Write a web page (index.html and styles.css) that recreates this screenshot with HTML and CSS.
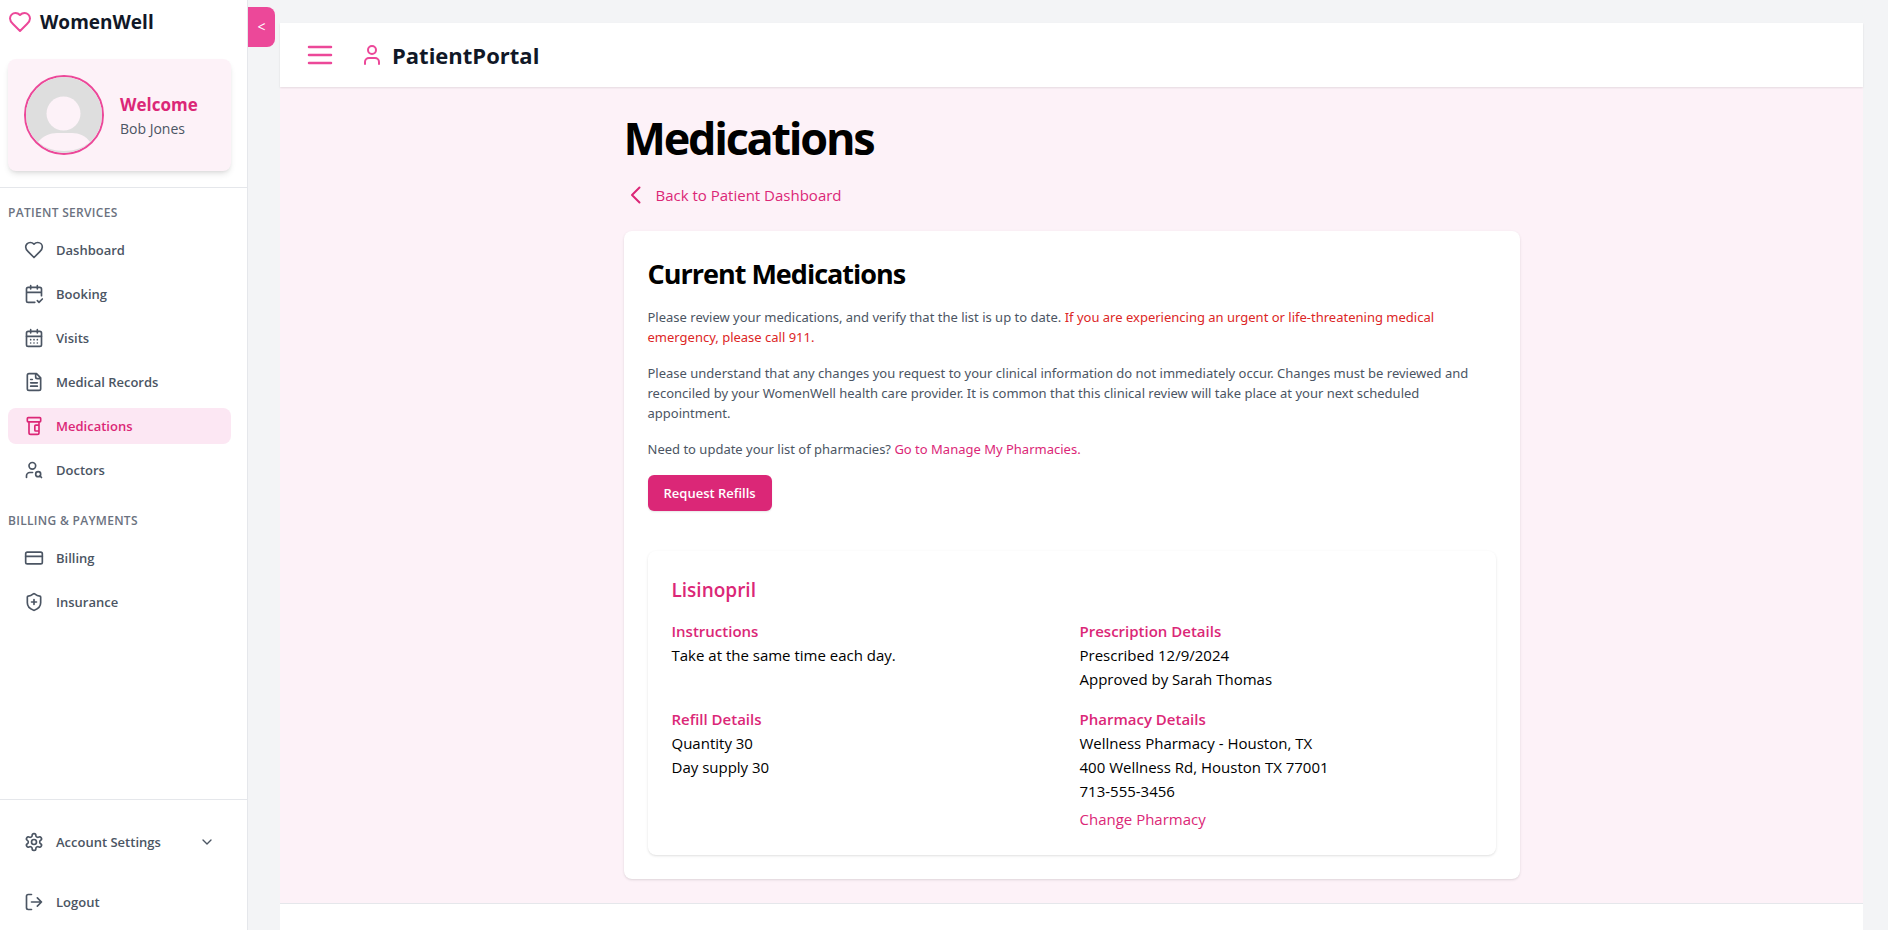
FILE: index.html
```html
<!DOCTYPE html>
<html lang="en">
<head>
<meta charset="utf-8">
<title>Medications - PatientPortal</title>
<link rel="stylesheet" href="styles.css">
</head>
<body>
<div class="app">
  <aside class="sidebar">
    <div class="sidebar-top">
      <a class="brand" href="#">
        <svg class="icon icon-lg" viewBox="0 0 24 24"><path d="M19 14c1.49-1.46 3-3.21 3-5.5A5.5 5.5 0 0 0 16.5 3c-1.76 0-3 .5-4.5 2-1.5-1.5-2.74-2-4.5-2A5.5 5.5 0 0 0 2 8.5c0 2.3 1.5 4.05 3 5.5l7 7Z"/></svg>
        <span>WomenWell</span>
      </a>
      <div class="profile">
        <svg class="avatar" viewBox="0 0 76 76" role="img" aria-label="Profile photo">
          <rect width="76" height="76" fill="#dedede"/>
          <circle cx="37.500" cy="36.500" r="17" fill="#fdf2f8"/>
          <path d="M12 65c5-6 12-9 19-9h15c7 0 14 3 18 9-7 6-16 9-26 9s-19-3-26-9z" fill="#fdf2f8"/>
        </svg>
        <div>
          <p class="welcome">Welcome</p>
          <p class="user-name">Bob Jones</p>
        </div>
      </div>
    </div>
    <nav class="nav">
      <section>
        <h2 class="nav-title">Patient Services</h2>
        <ul class="nav-list">
          <li><a class="nav-item" href="#"><svg class="icon" viewBox="0 0 24 24"><path d="M19 14c1.49-1.46 3-3.21 3-5.5A5.5 5.5 0 0 0 16.5 3c-1.76 0-3 .5-4.5 2-1.5-1.5-2.74-2-4.5-2A5.5 5.5 0 0 0 2 8.5c0 2.3 1.5 4.05 3 5.5l7 7Z"/></svg>Dashboard</a></li>
          <li><a class="nav-item" href="#"><svg class="icon" viewBox="0 0 24 24"><path d="M8 2v4M16 2v4M21 14V6a2 2 0 0 0-2-2H5a2 2 0 0 0-2 2v14a2 2 0 0 0 2 2h8M3 10h18M16 20l2 2 4-4"/></svg>Booking</a></li>
          <li><a class="nav-item" href="#"><svg class="icon" viewBox="0 0 24 24"><path d="M8 2v4M16 2v4M3 10h18M8 14h.01M12 14h.01M16 14h.01M8 18h.01M12 18h.01M16 18h.01"/><rect width="18" height="18" x="3" y="4" rx="2"/></svg>Visits</a></li>
          <li><a class="nav-item" href="#"><svg class="icon" viewBox="0 0 24 24"><path d="M15 2H6a2 2 0 0 0-2 2v16a2 2 0 0 0 2 2h12a2 2 0 0 0 2-2V7ZM14 2v4a2 2 0 0 0 2 2h4M10 9H8M16 13H8M16 17H8"/></svg>Medical Records</a></li>
          <li><a class="nav-item active" href="#" aria-current="page"><svg class="icon" viewBox="0 0 24 24"><path d="M18 11h-4a1 1 0 0 0-1 1v5a1 1 0 0 0 1 1h4M6 7v13a2 2 0 0 0 2 2h8a2 2 0 0 0 2-2V7"/><rect width="16" height="5" x="4" y="2" rx="1"/></svg>Medications</a></li>
          <li><a class="nav-item" href="#"><svg class="icon" viewBox="0 0 24 24"><circle cx="10" cy="7" r="4"/><path d="M10.300 15H7a4 4 0 0 0-4 4v2M21 21l-1.900-1.900"/><circle cx="17" cy="17" r="3"/></svg>Doctors</a></li>
        </ul>
      </section>
      <section>
        <h2 class="nav-title">Billing &amp; Payments</h2>
        <ul class="nav-list">
          <li><a class="nav-item" href="#"><svg class="icon" viewBox="0 0 24 24"><rect width="20" height="14" x="2" y="5" rx="2"/><path d="M2 10h20"/></svg>Billing</a></li>
          <li><a class="nav-item" href="#"><svg class="icon" viewBox="0 0 24 24"><path d="M20 13c0 5-3.500 7.500-7.660 8.950a1 1 0 0 1-.670-.010C7.500 20.500 4 18 4 13V6a1 1 0 0 1 1-1c2 0 4.500-1.200 6.240-2.720a1.170 1.170 0 0 1 1.520 0C14.510 3.810 17 5 19 5a1 1 0 0 1 1 1zM9 12h6M12 9v6"/></svg>Insurance</a></li>
        </ul>
      </section>
    </nav>
    <div class="sidebar-bottom">
      <button class="nav-item" type="button"><svg class="icon" viewBox="0 0 24 24"><path d="M12.220 2h-.44a2 2 0 0 0-2 2v.18a2 2 0 0 1-1 1.730l-.43.25a2 2 0 0 1-2 0l-.15-.08a2 2 0 0 0-2.730.73l-.22.38a2 2 0 0 0 .73 2.730l.15.1a2 2 0 0 1 1 1.720v.51a2 2 0 0 1-1 1.740l-.15.09a2 2 0 0 0-.73 2.730l.22.38a2 2 0 0 0 2.730.73l.15-.08a2 2 0 0 1 2 0l.43.25a2 2 0 0 1 1 1.730V20a2 2 0 0 0 2 2h.44a2 2 0 0 0 2-2v-.18a2 2 0 0 1 1-1.730l.43-.25a2 2 0 0 1 2 0l.15.08a2 2 0 0 0 2.730-.73l.22-.39a2 2 0 0 0-.73-2.730l-.15-.08a2 2 0 0 1-1-1.740v-.5a2 2 0 0 1 1-1.740l.15-.09a2 2 0 0 0 .73-2.730l-.22-.38a2 2 0 0 0-2.730-.73l-.15.08a2 2 0 0 1-2 0l-.43-.25a2 2 0 0 1-1-1.730V4a2 2 0 0 0-2-2z"/><circle cx="12" cy="12" r="3"/></svg>Account Settings<svg class="icon icon-sm push" viewBox="0 0 24 24"><path d="m6 9 6 6 6-6"/></svg></button>
      <button class="nav-item" type="button"><svg class="icon" viewBox="0 0 24 24"><path d="M9 21H5a2 2 0 0 1-2-2V5a2 2 0 0 1 2-2h4M16 17l5-5-5-5M21 12H9"/></svg>Logout</button>
    </div>
  </aside>
  <button class="collapse" type="button" aria-label="Collapse sidebar">&lt;</button>

  <div class="page">
    <header class="topbar">
      <button class="menu" type="button" aria-label="Menu"><svg class="icon icon-menu" viewBox="0 0 32 32"><path d="M5 8h22M5 16h22M5 24h22"/></svg></button>
      <a class="portal" href="#"><svg class="icon icon-lg" viewBox="0 0 24 24"><path d="M19 21v-2a4 4 0 0 0-4-4H9a4 4 0 0 0-4 4v2"/><circle cx="12" cy="7" r="4"/></svg><span>PatientPortal</span></a>
    </header>
    <main class="main">
      <div class="container">
        <h1 class="page-title">Medications</h1>
        <a class="back" href="#"><svg class="icon icon-back" viewBox="0 0 24 24"><path d="M15.500 4.500 8 12l7.500 7.500"/></svg>Back to Patient Dashboard</a>
        <section class="card">
          <h2 class="card-title">Current Medications</h2>
          <p class="note">Please review your medications, and verify that the list is up to date. <span class="urgent">If you are experiencing an urgent or life-threatening medical emergency, please call 911.</span></p>
          <p class="note">Please understand that any changes you request to your clinical information do not immediately occur. Changes must be reviewed and reconciled by your WomenWell health care provider. It is common that this clinical review will take place at your next scheduled appointment.</p>
          <p class="note">Need to update your list of pharmacies? <a class="link" href="#">Go to Manage My Pharmacies.</a></p>
          <button class="primary" type="button">Request Refills</button>
          <article class="med">
            <h3 class="med-name">Lisinopril</h3>
            <div class="med-grid">
              <div>
                <h4 class="med-label">Instructions</h4>
                <p>Take at the same time each day.</p>
              </div>
              <div>
                <h4 class="med-label">Prescription Details</h4>
                <p>Prescribed 12/9/2024</p>
                <p>Approved by Sarah Thomas</p>
              </div>
              <div>
                <h4 class="med-label">Refill Details</h4>
                <p>Quantity 30</p>
                <p>Day supply 30</p>
              </div>
              <div>
                <h4 class="med-label">Pharmacy Details</h4>
                <p>Wellness Pharmacy - Houston, TX</p>
                <p>400 Wellness Rd, Houston TX 77001</p>
                <p>713-555-3456</p>
                <a class="link change" href="#">Change Pharmacy</a>
              </div>
            </div>
          </article>
        </section>
      </div>
    </main>
    <footer class="footer"></footer>
  </div>
</div>
</body>
</html>
```
FILE: styles.css
```css
*, *::before, *::after { box-sizing: border-box; }
body {
  margin: 0;
  font-family: "Segoe UI", "Open Sans", "Noto Sans", sans-serif;
  font-size: 15px;
  line-height: 24px;
  color: #000;
  background: #f3f4f6;
}
h1, h2, h3, h4, p, ul { margin: 0; padding: 0; }
ul { list-style: none; }
a { color: inherit; text-decoration: none; }
button { border: 0; padding: 0; background: none; font: inherit; color: inherit; cursor: pointer; }

.icon {
  width: 20px;
  height: 20px;
  flex: none;
  fill: none;
  stroke: currentColor;
  stroke-width: 2;
  stroke-linecap: round;
  stroke-linejoin: round;
}
.icon-lg { width: 24px; height: 24px; color: #ec4899; }
.icon-sm { width: 16px; height: 16px; }
.icon-menu { width: 32px; height: 32px; stroke-width: 2.5; }
.icon-back { width: 24px; height: 24px; }
.push { margin-left: auto; }

.app { display: flex; align-items: flex-start; height: 100vh; overflow: hidden; }

.sidebar {
  display: flex;
  flex-direction: column;
  flex: none;
  width: 248px;
  height: 100vh;
  background: #fff;
  border-right: 1px solid #e5e7eb;
}
.sidebar-top { padding: 8px 16px 16px 8px; border-bottom: 1px solid #e5e7eb; }
.brand {
  display: flex;
  align-items: center;
  gap: 8px;
  height: 28px;
  margin-bottom: 23px;
  font-size: 19px;
  font-weight: 700;
  color: #111827;
}
.profile {
  display: flex;
  align-items: center;
  gap: 16px;
  padding: 16px;
  border-radius: 8px;
  background: #fdf2f8;
  box-shadow: 0 4px 6px -1px rgba(0, 0, 0, .1), 0 2px 4px -2px rgba(0, 0, 0, .1);
}
.avatar { width: 80px; height: 80px; border: 2px solid #ec4899; border-radius: 50%; }
.welcome { font-size: 17px; line-height: 28px; font-weight: 700; color: #db2777; }
.user-name { font-size: 14px; line-height: 20px; color: #4b5563; }

.nav { display: flex; flex-direction: column; flex: 1; gap: 24px; padding: 16px 16px 16px 8px; }
.nav-title {
  margin-bottom: 10px;
  font-size: 12px;
  line-height: 18px;
  font-weight: 600;
  letter-spacing: .025em;
  text-transform: uppercase;
  color: #6b7280;
}
.nav-list { display: flex; flex-direction: column; gap: 8px; }
.nav-item {
  display: flex;
  align-items: center;
  gap: 12px;
  width: 100%;
  padding: 8px 16px;
  border-radius: 8px;
  font-size: 13px;
  line-height: 20px;
  font-weight: 600;
  color: #4b5563;
}
.nav-item.active { background: #fce7f3; color: #db2777; }
.sidebar-bottom {
  display: flex;
  flex-direction: column;
  gap: 24px;
  padding: 24px 16px 10px 8px;
  border-top: 1px solid #e5e7eb;
}

.collapse {
  flex: none;
  width: 27px;
  height: 40px;
  margin-top: 7px;
  border-radius: 0 8px 8px 0;
  background: #ec4899;
  color: #fff;
  font-size: 14px;
}

.page { flex: 1; min-width: 0; display: flex; flex-direction: column; min-height: 100vh; padding: 23px 25px 0 5px; }
.topbar {
  display: flex;
  align-items: center;
  gap: 24px;
  height: 64px;
  padding: 0 24px;
  background: #fff;
  box-shadow: 0 1px 2px rgba(0, 0, 0, .1);
  z-index: 1;
}
.menu { display: flex; color: #ec4899; }
.portal { display: flex; align-items: center; gap: 8px; font-size: 22px; line-height: 32px; font-weight: 700; color: #111827; }

.main { padding: 24px; background: #fdf2f8; }
.container { max-width: 896px; margin: 0 auto; }
.page-title { font-size: 45px; line-height: 54px; font-weight: 700; letter-spacing: -.05em; }
.back { display: flex; align-items: center; gap: 8px; margin: 18px 0 24px; color: #db2777; }
.card {
  padding: 24px;
  border-radius: 8px;
  background: #fff;
  box-shadow: 0 1px 3px rgba(0, 0, 0, .1), 0 1px 2px -1px rgba(0, 0, 0, .1);
}
.card-title { font-size: 27px; line-height: 38px; font-weight: 700; letter-spacing: -1px; }
.note { margin-top: 16px; font-family: "Segoe UI", "Noto Sans", sans-serif; font-size: 13px; line-height: 20px; color: #4b5563; }
.card-title + .note { margin-top: 14px; }
.urgent { color: #dc2626; }
.link { color: #db2777; }
.primary {
  margin-top: 16px;
  padding: 8px 16px;
  border-radius: 6px;
  background: #db2777;
  color: #fff;
  font-size: 13px;
  line-height: 20px;
  font-weight: 600;
  box-shadow: 0 1px 2px rgba(0, 0, 0, .1);
}
.med {
  margin-top: 40px;
  padding: 24px;
  border-radius: 8px;
  box-shadow: 0 1px 3px rgba(0, 0, 0, .1), 0 1px 2px -1px rgba(0, 0, 0, .1);
}
.med-name { margin-bottom: 14px; font-size: 19px; line-height: 30px; font-weight: 600; color: #db2777; }
.med-grid { display: grid; grid-template-columns: 1fr 1fr; gap: 16px; }
.med-label { font-size: 15px; font-weight: 600; color: #db2777; }
.change { display: block; margin-top: 4px; }

.footer { flex: 1; min-height: 24px; background: #fff; border-top: 1px solid #e5e7eb; }
```
